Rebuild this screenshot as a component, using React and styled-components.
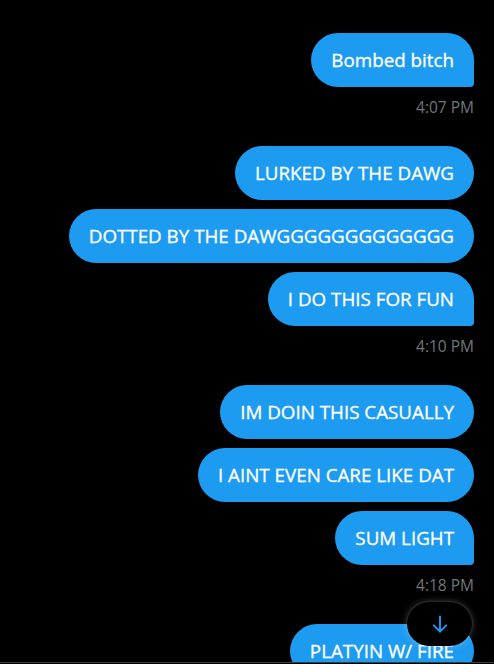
import React from "react";
import styled, { createGlobalStyle } from "styled-components";

const Global = createGlobalStyle`
  html, body { margin: 0; padding: 0; background: #000; }
  body { font-family: "Open Sans", "Liberation Sans", Arial, sans-serif; }
  * { box-sizing: border-box; }
`;

const Screen = styled.div`
  width: 494px;
  height: 664px;
  background: #000;
  display: flex;
  flex-direction: column;
  overflow: hidden;
`;

const Scroller = styled.div`
  position: relative;
  flex: 1;
  overflow: hidden;
  padding: 33px 20px 0 20px;
`;

const Thread = styled.div`
  display: flex;
  flex-direction: column;
  gap: 30px;
`;

const Group = styled.div`
  display: flex;
  flex-direction: column;
  align-items: flex-end;
  gap: 9px;
`;

const Bubble = styled.div`
  background: #1d9bf0;
  color: #fff;
  font-family: "Open Sans", "Liberation Sans", Arial, sans-serif;
  font-size: 18.8px;
  font-weight: 500;
  -webkit-text-stroke: 0.3px #fff;
  line-height: 22px;
  padding: 16px 20px;
  border-radius: 27px;
  border-bottom-right-radius: ${(p) => (p.$last ? "4px" : "27px")};
  white-space: nowrap;
`;

const Stamp = styled.div`
  color: #71767b;
  font-family: "Open Sans", "Liberation Sans", Arial, sans-serif;
  font-size: 15.5px;
  line-height: 20px;
  height: 20px;
  padding-top: 1px;
`;

const Footer = styled.div`
  height: 2px;
  border-top: 1px solid #3a3c3e;
  background: #000;
`;

const ScrollDown = styled.button`
  position: absolute;
  right: 22px;
  bottom: 16px;
  width: 65px;
  height: 44px;
  border-radius: 22px;
  border: none;
  background: #000;
  box-shadow: 0 0 7px rgba(255, 255, 255, 0.28), 0 0 2px rgba(255, 255, 255, 0.2);
  display: flex;
  align-items: center;
  justify-content: center;
  padding: 0;
`;

const groups = [
  { msgs: ["Bombed bitch"], time: "4:07 PM" },
  {
    msgs: ["LURKED BY THE DAWG", "DOTTED BY THE DAWGGGGGGGGGGGGG", "I DO THIS FOR FUN"],
    time: "4:10 PM",
  },
  {
    msgs: ["IM DOIN THIS CASUALLY", "I AINT EVEN CARE LIKE DAT", "SUM LIGHT"],
    time: "4:18 PM",
  },
  { msgs: ["PLATYIN W/ FIRE"], time: null },
];

export default function App() {
  return (
    <Screen>
      <Global />
      <Scroller>
        <Thread>
          {groups.map((g, gi) => (
            <Group key={gi}>
              {g.msgs.map((m, i) => (
                <Bubble key={i} $last={i === g.msgs.length - 1 && g.time}>
                  {m}
                </Bubble>
              ))}
              {g.time && <Stamp>{g.time}</Stamp>}
            </Group>
          ))}
        </Thread>
        <ScrollDown aria-label="Scroll to bottom">
          <svg width="20" height="20" viewBox="0 0 20 20" fill="none" stroke="#1d9bf0" strokeWidth="1.9" strokeLinecap="round" strokeLinejoin="round">
            <path d="M10 2.5v15" />
            <path d="M3.8 11.3L10 17.5l6.2-6.2" />
          </svg>
        </ScrollDown>
      </Scroller>
      <Footer />
    </Screen>
  );
}
